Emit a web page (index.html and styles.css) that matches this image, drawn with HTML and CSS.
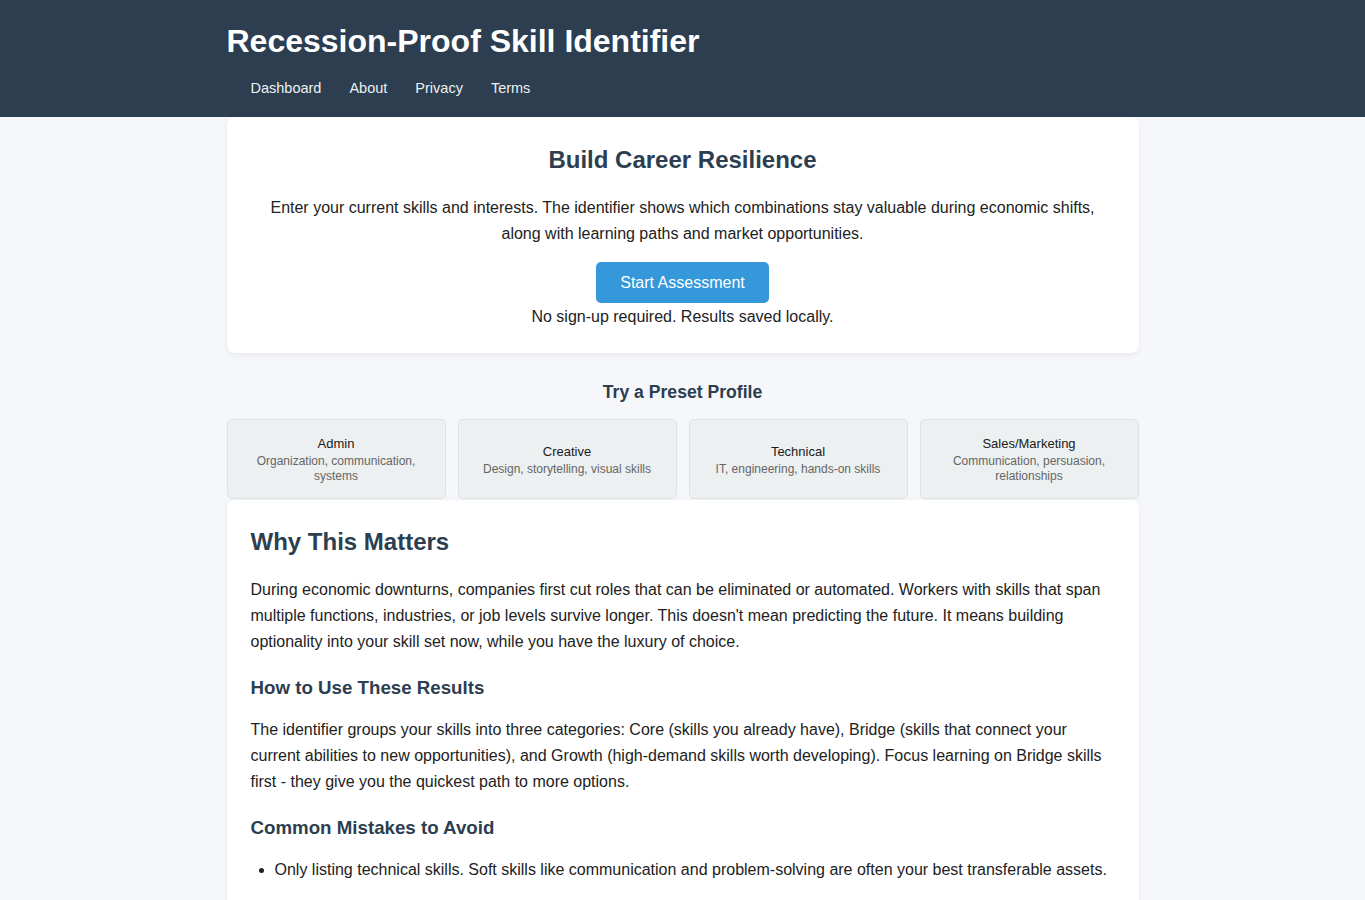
FILE: index.html
```html
<!DOCTYPE html>
<html lang="en">
<head>
<meta charset="utf-8">
<title>Recession-Proof Skill Identifier</title>
<link rel="stylesheet" href="styles.css">
</head>
<body>
<header class="site-header">
  <div class="container">
    <h1 class="site-title">Recession-Proof Skill Identifier</h1>
    <nav class="site-nav">
      <a href="#">Dashboard</a>
      <a href="#">About</a>
      <a href="#">Privacy</a>
      <a href="#">Terms</a>
    </nav>
  </div>
</header>

<main class="container">
  <section class="card hero">
    <h2>Build Career Resilience</h2>
    <p class="hero-text">Enter your current skills and interests. The identifier shows which combinations stay valuable during economic shifts, along with learning paths and market opportunities.</p>
    <button class="btn-primary" type="button">Start Assessment</button>
    <p class="hero-note">No sign-up required. Results saved locally.</p>
  </section>

  <section class="presets">
    <h3 class="presets-title">Try a Preset Profile</h3>
    <div class="preset-grid">
      <button class="preset" type="button">
        <span class="preset-name">Admin</span>
        <span class="preset-desc">Organization, communication, systems</span>
      </button>
      <button class="preset" type="button">
        <span class="preset-name">Creative</span>
        <span class="preset-desc">Design, storytelling, visual skills</span>
      </button>
      <button class="preset" type="button">
        <span class="preset-name">Technical</span>
        <span class="preset-desc">IT, engineering, hands-on skills</span>
      </button>
      <button class="preset" type="button">
        <span class="preset-name">Sales/Marketing</span>
        <span class="preset-desc">Communication, persuasion, relationships</span>
      </button>
    </div>
  </section>

  <section class="card article">
    <h2>Why This Matters</h2>
    <p>During economic downturns, companies first cut roles that can be eliminated or automated. Workers with skills that span multiple functions, industries, or job levels survive longer. This doesn't mean predicting the future. It means building optionality into your skill set now, while you have the luxury of choice.</p>
    <h3>How to Use These Results</h3>
    <p>The identifier groups your skills into three categories: Core (skills you already have), Bridge (skills that connect your current abilities to new opportunities), and Growth (high-demand skills worth developing). Focus learning on Bridge skills first - they give you the quickest path to more options.</p>
    <h3>Common Mistakes to Avoid</h3>
    <ul>
      <li>Only listing technical skills. Soft skills like communication and problem-solving are often your best transferable assets.</li>
      <li>Ignoring adjacent industries. The same skill can be worth far more in a different sector.</li>
      <li>Chasing every trend. Pick one or two Growth skills and build depth before adding more.</li>
    </ul>
  </section>
</main>
</body>
</html>
```

FILE: styles.css
```css
* {
  box-sizing: border-box;
}

body {
  margin: 0;
  background: #f5f7fa;
  color: #222;
  font-family: "Liberation Sans", Arial, sans-serif;
  font-size: 16px;
  line-height: 26px;
}

.container {
  width: 912px;
  margin: 0 auto;
}

/* Header */
.site-header {
  background: #2c3e50;
  color: #fff;
  padding: 23px 0 12px;
}

.site-title {
  margin: 0;
  font-size: 32px;
  line-height: 37px;
  font-weight: 700;
}

.site-nav {
  display: flex;
  margin-top: 12px;
  padding-left: 10px;
}

.site-nav a {
  color: #ecf0f1;
  text-decoration: none;
  font-size: 14.5px;
  line-height: 17px;
  padding: 8px 14px;
}

/* Cards */
.card {
  background: #fff;
  border-radius: 8px;
  box-shadow: 0 2px 6px rgba(0, 0, 0, 0.06);
}

.hero {
  text-align: center;
  padding: 29px 24px 23px;
}

.hero h2 {
  margin: 0 0 21px;
  color: #2c3e50;
  font-size: 24px;
  line-height: 28px;
}

.hero-text {
  margin: 0 0 15px;
  color: #222;
}

.btn-primary {
  display: inline-block;
  height: 41px;
  background: #3498db;
  color: #fff;
  border: 0;
  border-radius: 5px;
  font-family: inherit;
  font-size: 16px;
  line-height: 18px;
  padding: 11px 24px;
  vertical-align: top;
  cursor: pointer;
}

.hero-note {
  margin: 1px 0 0;
  color: #222;
}

/* Preset profiles */
.presets {
  padding-top: 29px;
}

.presets-title {
  margin: 0 0 16px;
  text-align: center;
  color: #2c3e50;
  font-size: 17.6px;
  line-height: 21px;
}

.preset-grid {
  display: grid;
  grid-template-columns: repeat(4, 1fr);
  gap: 12px;
}

.preset {
  display: flex;
  flex-direction: column;
  align-items: center;
  justify-content: center;
  height: 80px;
  padding: 15px 20px 13px;
  background: #ecf0f1;
  border: 1px solid #dde2e4;
  border-radius: 5px;
  font-family: inherit;
  text-align: center;
  cursor: pointer;
}

.preset-name {
  font-size: 13px;
  line-height: 16px;
  color: #1a1a1a;
}

.preset-desc {
  margin-top: 2px;
  font-size: 12px;
  line-height: 15px;
  color: #666;
}

/* Article */
.article {
  margin-top: 1px;
  padding: 28px 24px 24px;
}

.article h2 {
  margin: 0 0 21px;
  color: #2c3e50;
  font-size: 24px;
  line-height: 28px;
}

.article h3 {
  margin: 22px 0 18px;
  color: #2c3e50;
  font-size: 18.72px;
  line-height: 22px;
}

.article p {
  margin: 0 0 16px;
  color: #222;
}

.article ul {
  margin: 0;
  padding-left: 24px;
  color: #222;
}

.article li {
  margin-bottom: 18px;
}
```
